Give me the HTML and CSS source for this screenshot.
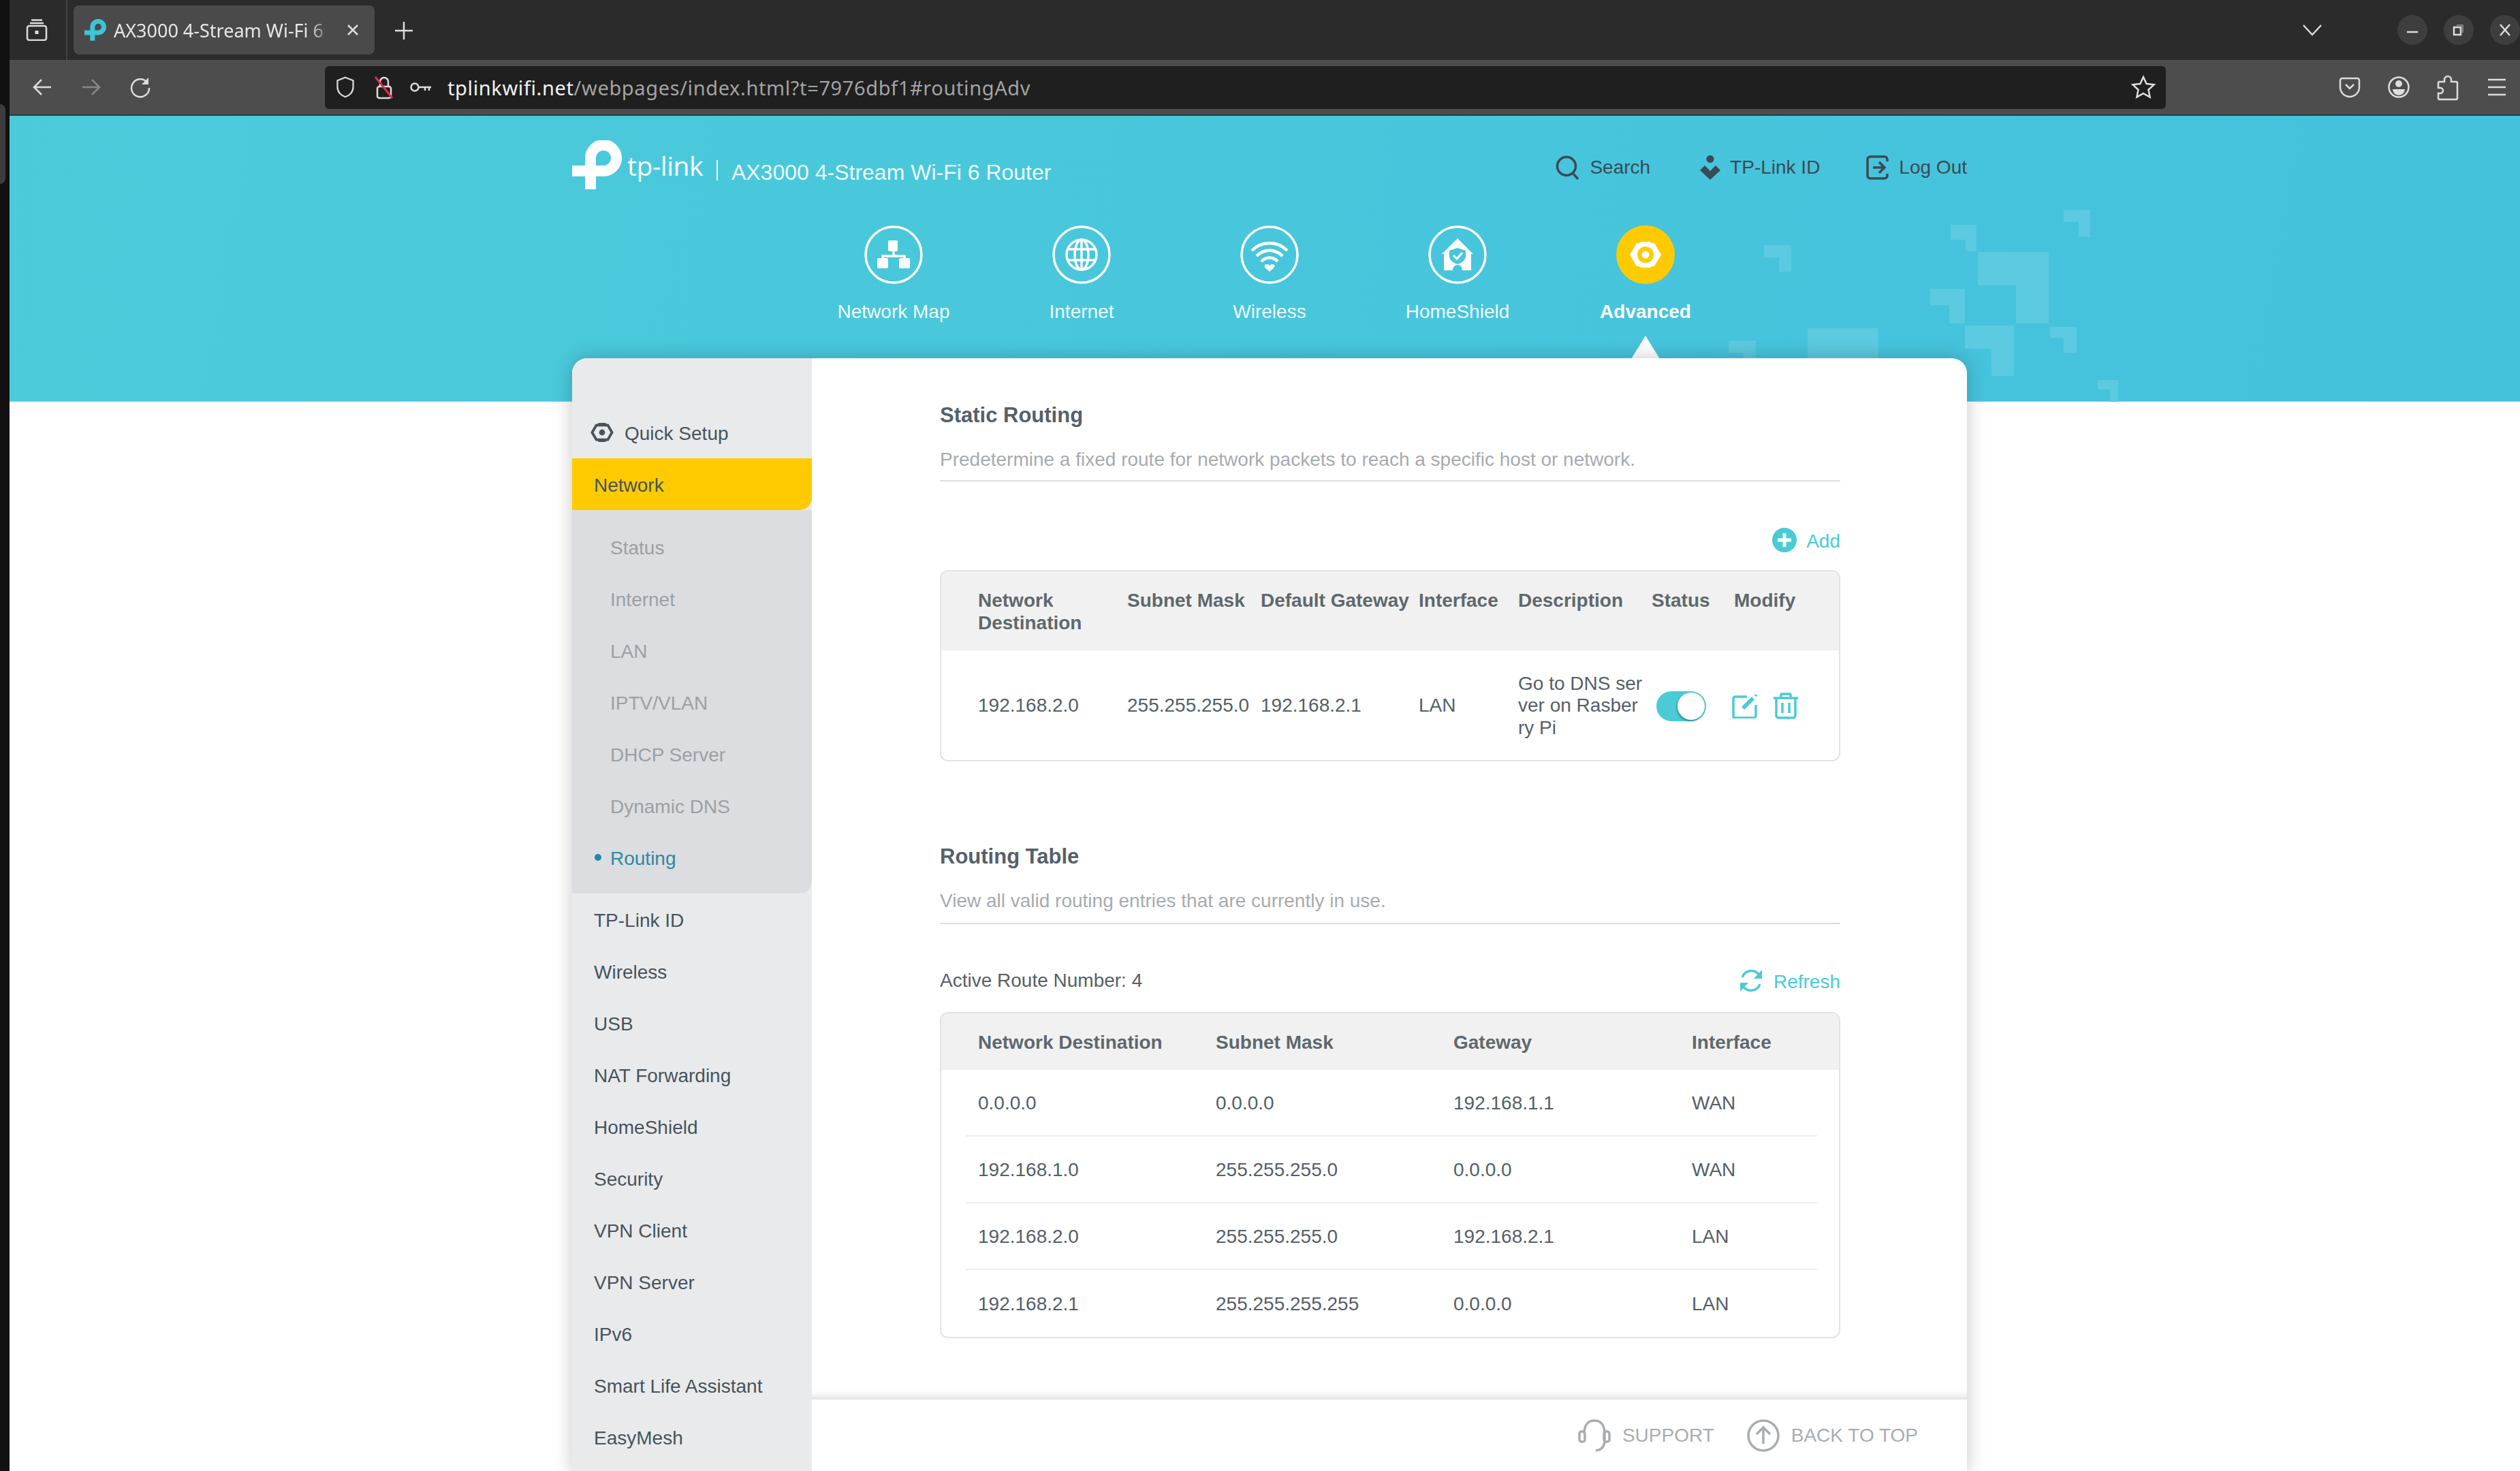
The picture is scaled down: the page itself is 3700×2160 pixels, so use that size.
FILE: index.html
```html
<!DOCTYPE html>
<html>
<head>
	<title>AX3000 4-Stream Wi-Fi 6 Router</title>
	<link rel="stylesheet" href="styles.css">
</head>
<body>
<div class="desk">
	<div class="strip"><div class="dock-item"></div></div>
	<div class="window">

		<!-- barra de abas -->
		<div class="tabbar">
			<div class="tabs-btn">
				<svg class="ic32" viewBox="0 0 32 32"><path class="line" d="M8 1.500h16M6 6h20"/><rect class="line" x="2" y="10" width="28" height="21" rx="3"/><rect x="13.500" y="17" width="5" height="5" fill="#ddd"/></svg>
			</div>
			<div class="tab">
				<svg class="favicon" viewBox="0 0 73 72"><path class="logo-path cyan" d="M27 72V26A19 19 0 1 1 46 45H0"/></svg>
				<span class="tab-title">AX3000 4-Stream Wi-Fi 6</span>
				<svg class="ic20" viewBox="0 0 20 20"><path class="line" d="M3 3l14 14M17 3L3 17"/></svg>
			</div>
			<div class="new-tab">
				<svg class="ic32" viewBox="0 0 32 32"><path class="line" d="M16 3v26M3 16h26"/></svg>
			</div>
			<div class="tabbar-right">
				<svg class="chevron" viewBox="0 0 32 20"><path class="line" d="M3 3l13 14L29 3"/></svg>
				<div class="win-btn"><svg class="ic20" viewBox="0 0 20 20"><path class="line" d="M2 13h16"/></svg></div>
				<div class="win-btn"><svg class="ic20" viewBox="0 0 20 20"><rect class="line" x="3" y="6" width="10" height="11"/><path class="line thin" d="M7 3h9v11"/></svg></div>
				<div class="win-btn"><svg class="ic20" viewBox="0 0 20 20"><path class="line" d="M3 2l14 16M17 2L3 18"/></svg></div>
			</div>
		</div>

		<!-- barra de endereco -->
		<div class="toolbar">
			<div class="tool-btn"><svg class="ic32" viewBox="0 0 32 32"><path class="line" d="M29 16H5M15 5L4 16l11 11"/></svg></div>
			<div class="tool-btn off"><svg class="ic32" viewBox="0 0 32 32"><path class="line" d="M3 16h24M17 5l11 11-11 11"/></svg></div>
			<div class="tool-btn"><svg class="ic32" viewBox="0 0 32 32"><path class="line" d="M26 9A13 13 0 1 0 29 17"/><path d="M28 2v10H18z" fill="#ddd"/></svg></div>
			<div class="urlbar">
				<svg class="ic32" viewBox="0 0 32 36"><path class="line" d="M16 2l13 5v11c0 8-6 14-13 16C9 32 3 26 3 18V7z"/></svg>
				<svg class="ic32 lock" viewBox="0 0 32 36"><rect class="line" x="6" y="17" width="20" height="17" rx="3"/><path class="line" d="M10 17v-7a6 6 0 0 1 12 0v7"/><path class="slash" d="M3 3l25 31"/></svg>
				<svg class="ic32 key" viewBox="0 0 32 20"><circle class="line" cx="7" cy="10" r="5.500"/><path class="line" d="M13 10h18M22 10v5M28 10v5"/></svg>
				<div class="url"><span class="url-host">tplinkwifi.net</span>/webpages/index.html?t=7976dbf1#routingAdv</div>
				<svg class="ic36 star" viewBox="0 0 36 36"><path class="line" d="M18 3l4.600 10 10.900 1.300-8 7.500 2.100 10.700-9.600-5.400-9.600 5.400 2.100-10.700-8-7.500L13.400 13z"/></svg>
			</div>
			<div class="tool-right">
				<div class="tool-btn"><svg class="ic32" viewBox="0 0 32 32"><path class="line" d="M5 3h22a3 3 0 0 1 3 3v10a14 14 0 0 1-28 0V6a3 3 0 0 1 3-3z"/><path class="line" d="M10 12l6 6 6-6"/></svg></div>
				<div class="tool-btn"><svg class="ic32" viewBox="0 0 32 32"><circle class="line" cx="16" cy="16" r="14.500"/><circle cx="16" cy="11" r="5" fill="#ddd"/><path d="M7 19h18a9 9 0 0 1-18 0z" fill="#ddd"/></svg></div>
				<div class="tool-btn"><svg class="ic32 tall" viewBox="0 0 32 40"><path class="line" d="M4 38a2 2 0 0 1-2-2v-7h3a4 4 0 0 0 0-8H2v-7a2 2 0 0 1 2-2h7V9a5 5 0 0 1 10 0v3h7a2 2 0 0 1 2 2v22a2 2 0 0 1-2 2z"/></svg></div>
				<div class="tool-btn"><svg class="ic32" viewBox="0 0 32 32"><path class="line" d="M3 5h26M3 16h26M3 27h26"/></svg></div>
			</div>
		</div>

		<div class="page">
			<header class="hero">
				<svg class="hero-pattern" viewBox="0 0 3686 420">
					<g transform="translate(-14 -170)">
						<path d="M2538 500h40v40h-18v-22h-22z"/>
						<path d="M2590 360h40v39h-18v-21h-22z"/>
						<path d="M2654 482h104v120h-60v-64h-44z"/>
						<path d="M2864 330h38v39h-16v-17h-22z"/>
						<path d="M3030 308h39v40h-17v-22h-22z"/>
						<path d="M2904 370h104v105h-48v-56h-56z"/>
						<path d="M2834 424h51v51h-23v-27h-28z"/>
						<path d="M2885 478h72v74h-33v-40h-39z"/>
						<path d="M3010 480h39v38h-19v-22h-20z"/>
						<path d="M3080 558h30v32h-12v-18h-18z"/>
					</g>
				</svg>
				<div class="hero-top">
					<div class="brand">
						<svg class="logo" viewBox="0 0 73 72"><path class="logo-path" d="M27 72V26A19 19 0 1 1 46 45H0"/></svg>
						<span class="logo-name">tp-link</span>
						<span class="brand-sep"></span>
						<span class="model">AX3000 4-Stream Wi-Fi 6 Router</span>
					</div>
					<div class="top-links">
						<a class="top-link">
							<svg class="ic36" viewBox="0 0 36 36"><circle class="dark-line" cx="16" cy="16" r="13.500"/><path class="dark-line" d="M25 26l8 9"/></svg>
							Search
						</a>
						<a class="top-link">
							<svg class="ic36 person" viewBox="0 0 30 36"><circle cx="15" cy="5.500" r="5.500" fill="#3b4a54"/><path d="M0 22l7-7 8 8 8-8 7 7-15 14z" fill="#3b4a54"/></svg>
							TP-Link ID
						</a>
						<a class="top-link">
							<svg class="ic36 logout" viewBox="0 0 34 36"><path class="dark-line" d="M31 9V6a4 4 0 0 0-4-4H6a4 4 0 0 0-4 4v24a4 4 0 0 0 4 4h21a4 4 0 0 0 4-4v-3"/><path class="dark-line" d="M10 18h17M19 10l8 8-8 8"/></svg>
							Log Out
						</a>
					</div>
				</div>
				<nav class="main-nav">
					<a class="nav-item">
						<svg class="nav-icon" viewBox="0 0 86 86"><circle class="ring" cx="43" cy="43" r="41"/><rect x="35" y="22" width="14" height="16" rx="2" fill="#fff"/><rect x="19" y="48" width="16" height="15" rx="2" fill="#fff"/><rect x="51" y="48" width="16" height="15" rx="2" fill="#fff"/><path class="glyph" d="M43 38v7M27 49v-4h32v4"/></svg>
						<span>Network Map</span>
					</a>
					<a class="nav-item">
						<svg class="nav-icon" viewBox="0 0 86 86"><circle class="ring" cx="43" cy="43" r="41"/><circle class="glyph" cx="43" cy="43" r="22"/><ellipse class="glyph" cx="43" cy="43" rx="10" ry="22"/><path class="glyph" d="M43 21v44M23 35h40M23 51h40"/></svg>
						<span>Internet</span>
					</a>
					<a class="nav-item">
						<svg class="nav-icon" viewBox="0 0 86 86"><circle class="ring" cx="43" cy="43" r="41"/><path class="glyph thick" d="M17 37a36 36 0 0 1 52 0M24 45a26 26 0 0 1 38 0M31 53a16 16 0 0 1 24 0"/><path d="M36 58a5 5 0 0 1 7 1 5 5 0 0 1 7-1c2 3-3 6-7 10-4-4-9-7-7-10z" fill="#fff"/></svg>
						<span>Wireless</span>
					</a>
					<a class="nav-item">
						<svg class="nav-icon" viewBox="0 0 86 86"><circle class="ring" cx="43" cy="43" r="41"/><path d="M43 19l23 23h-3v24H50c0-5-3-8-7-8s-7 3-7 8H23V42h-3z" fill="#fff"/><path d="M43 33l12 4v8c0 6-6 10-12 12-6-2-12-6-12-12v-8z" fill="#47c6dc"/><path d="M37 44l5 5 8-9" fill="none" stroke="#fff" stroke-width="3"/></svg>
						<span>HomeShield</span>
					</a>
					<a class="nav-item current">
						<svg class="nav-icon" viewBox="0 0 86 86"><circle cx="43" cy="43" r="43" fill="#ffcb00"/><path d="M20 43l10-17h4a4 4 0 0 1 4-2h10a4 4 0 0 1 4 2h4l10 17-10 17h-4a4 4 0 0 1-4 2H38a4 4 0 0 1-4-2h-4z" fill="#fff"/><circle cx="43" cy="43" r="12" fill="#ffcb00"/><circle cx="43" cy="43" r="5.500" fill="#fff"/></svg>
						<span>Advanced</span>
					</a>
				</nav>
			</header>

			<main class="card">
				<aside class="sidebar">
					<a class="side-item quick">
						<svg class="quick-icon" viewBox="17 21 52 44"><path d="M20 43l10-17h4a4 4 0 0 1 4-2h10a4 4 0 0 1 4 2h4l10 17-10 17h-4a4 4 0 0 1-4 2H38a4 4 0 0 1-4-2h-4z" fill="#46545c"/><path d="M26 43l7-12h20l7 12-7 12H33z" fill="#e9eaec"/><circle cx="43" cy="43" r="6" fill="#46545c"/></svg>
						<span class="side-text">Quick Setup</span>
					</a>
					<a class="side-item active"><span class="side-text">Network</span></a>
					<div class="submenu">
						<a class="sub-item"><span class="side-text">Status</span></a>
						<a class="sub-item"><span class="side-text">Internet</span></a>
						<a class="sub-item"><span class="side-text">LAN</span></a>
						<a class="sub-item"><span class="side-text">IPTV/VLAN</span></a>
						<a class="sub-item"><span class="side-text">DHCP Server</span></a>
						<a class="sub-item"><span class="side-text">Dynamic DNS</span></a>
						<a class="sub-item selected"><span class="side-text">Routing</span></a>
					</div>
					<a class="side-item"><span class="side-text">TP-Link ID</span></a>
					<a class="side-item"><span class="side-text">Wireless</span></a>
					<a class="side-item"><span class="side-text">USB</span></a>
					<a class="side-item"><span class="side-text">NAT Forwarding</span></a>
					<a class="side-item"><span class="side-text">HomeShield</span></a>
					<a class="side-item"><span class="side-text">Security</span></a>
					<a class="side-item"><span class="side-text">VPN Client</span></a>
					<a class="side-item"><span class="side-text">VPN Server</span></a>
					<a class="side-item"><span class="side-text">IPv6</span></a>
					<a class="side-item"><span class="side-text">Smart Life Assistant</span></a>
					<a class="side-item"><span class="side-text">EasyMesh</span></a>
				</aside>

				<div class="content-col">
					<div class="content">
						<section class="block-static">
							<h2 class="block-title">Static Routing</h2>
							<p class="block-desc">Predetermine a fixed route for network packets to reach a specific host or network.</p>
							<div class="actions first">
								<a class="action">
									<svg class="ic36" viewBox="0 0 36 36"><circle cx="18" cy="18" r="18" fill="#4acbd6"/><path d="M18 8v20M8 18h20" stroke="#fff" stroke-width="5"/></svg>
									<span class="action-text">Add</span>
								</a>
							</div>
							<div class="grid-table">
								<div class="row head-row static-cols">
									<div>Network Destination</div>
									<div>Subnet Mask</div>
									<div>Default Gateway</div>
									<div>Interface</div>
									<div>Description</div>
									<div>Status</div>
									<div>Modify</div>
								</div>
								<div class="row body-row static-cols">
									<div>192.168.2.0</div>
									<div>255.255.255.0</div>
									<div>192.168.2.1</div>
									<div>LAN</div>
									<div class="desc-cell">Go to DNS server on Rasberry Pi</div>
									<div><div class="toggle"></div></div>
									<div class="modify">
										<svg class="edit-icon" viewBox="0 0 38 36"><path class="teal-line" d="M22 4H5a3 3 0 0 0-3 3v26a2 2 0 0 0 2 2h28a3 3 0 0 0 3-3V16"/><path class="teal-line fat" d="M16 21L31 6"/><path class="teal-line" d="M34 3l2-2"/></svg>
										<svg class="trash-icon" viewBox="0 0 36 39"><path class="teal-line" d="M0 8h36M11 8V3a1 1 0 0 1 1-1h12a1 1 0 0 1 1 1v5M4 8v26a3 3 0 0 0 3 3h22a3 3 0 0 0 3-3V8M13 15v15M23 15v15"/></svg>
									</div>
								</div>
							</div>
						</section>

						<section class="block-table">
							<h2 class="block-title">Routing Table</h2>
							<p class="block-desc">View all valid routing entries that are currently in use.</p>
							<div class="actions second">
								<span class="route-count">Active Route Number: 4</span>
								<a class="action">
									<svg class="refresh-icon" viewBox="0 0 38 38"><path class="teal-line" d="M6 14A14 14 0 0 1 31 11M32 24A14 14 0 0 1 7 27"/><path d="M35 3v13H23zM3 35V22h12z" fill="#4acbd6"/></svg>
									<span class="action-text">Refresh</span>
								</a>
							</div>
							<div class="grid-table">
								<div class="row head-row route-head route-cols">
									<div>Network Destination</div>
									<div>Subnet Mask</div>
									<div>Gateway</div>
									<div>Interface</div>
								</div>
								<div class="row route-row route-cols"><div>0.0.0.0</div><div>0.0.0.0</div><div>192.168.1.1</div><div>WAN</div></div>
								<div class="row route-row route-cols"><div>192.168.1.0</div><div>255.255.255.0</div><div>0.0.0.0</div><div>WAN</div></div>
								<div class="row route-row route-cols"><div>192.168.2.0</div><div>255.255.255.0</div><div>192.168.2.1</div><div>LAN</div></div>
								<div class="row route-row route-cols"><div>192.168.2.1</div><div>255.255.255.255</div><div>0.0.0.0</div><div>LAN</div></div>
							</div>
						</section>
					</div>

					<footer class="card-footer">
						<a class="foot-link">
							<svg class="foot-icon" viewBox="0 0 48 48"><path class="grey-line" d="M9 21C9 8 15 2 24 2s15 6 15 19v10c0 9-5 14-13 15"/><rect class="grey-line" x="2" y="18" width="8" height="15" rx="3"/><rect class="grey-line" x="38" y="18" width="8" height="15" rx="3"/></svg>
							SUPPORT
						</a>
						<a class="foot-link">
							<svg class="foot-icon" viewBox="0 0 48 48"><circle class="grey-line" cx="24" cy="24" r="22"/><path class="grey-line" d="M24 36V13M14 22l10-10 10 10"/></svg>
							BACK TO TOP
						</a>
					</footer>
				</div>
			</main>
		</div>
	</div>
</div>
</body>
</html>
```

FILE: styles.css
```css
* {
  box-sizing: border-box;
}

html, body {
  margin: 0;
  height: 2160px;
  overflow: hidden;
  background: #fff;
  font-family: "Liberation Sans", Arial, sans-serif;
  font-size: 28px;
  color: #555f66;
}

svg {
  display: block;
  flex: none;
}

.desk {
  display: flex;
  height: 2160px;
}

.strip {
  position: relative;
  width: 14px;
  background: #111;
}

.dock-item {
  position: absolute;
  left: 0;
  top: 153px;
  width: 8px;
  height: 117px;
  background: #3c3c3c;
  border-radius: 0 8px 8px 0;
}

.window {
  width: 3686px;
}

/* icones do navegador */
.line {
  fill: none;
  stroke: #ddd;
  stroke-width: 2.5;
}

.line.thin {
  stroke-width: 1.5;
  stroke: #999;
}

.slash {
  stroke: #e0304f;
  stroke-width: 3;
}

.ic20 {
  width: 20px;
  height: 20px;
}

.ic32 {
  width: 32px;
  height: 32px;
}

.ic36 {
  width: 36px;
  height: 36px;
}

/* barra de abas */
.tabbar {
  display: flex;
  height: 88px;
  background: #2b2b2b;
  font-family: "Noto Sans", sans-serif;
  color: #e6e6e6;
}

.tabs-btn {
  display: flex;
  align-items: center;
  justify-content: center;
  width: 85px;
  padding-right: 4px;
  border-right: 2px solid #444;
}

.tab {
  display: flex;
  align-items: center;
  width: 442px;
  height: 72px;
  margin: 8px 0 0 9px;
  padding: 0 22px 0 16px;
  background: #4a4a4a;
  border-radius: 8px;
}

.favicon {
  width: 32px;
  height: 32px;
}

.logo-path {
  fill: none;
  stroke: #fff;
  stroke-width: 16;
}

.logo-path.cyan {
  stroke: #3fc3d6;
}

.tab-title {
  flex: 1;
  margin-left: 11px;
  font-size: 27px;
  white-space: nowrap;
  -webkit-mask-image: linear-gradient(to right, #000 84%, rgba(0, 0, 0, 0.2) 92%);
  mask-image: linear-gradient(to right, #000 84%, rgba(0, 0, 0, 0.2) 92%);
}

.new-tab {
  display: flex;
  align-items: center;
  justify-content: center;
  width: 56px;
  margin-left: 15px;
  padding-top: 2px;
}

.tabbar-right {
  display: flex;
  align-items: center;
  gap: 24px;
  margin-left: auto;
}

.chevron {
  width: 32px;
  height: 20px;
  margin-right: 85px;
}

.win-btn {
  display: flex;
  align-items: center;
  justify-content: center;
  width: 44px;
  height: 44px;
  background: #3e3e3e;
  border-radius: 50%;
}

/* barra de endereco */
.toolbar {
  display: flex;
  align-items: center;
  height: 82px;
  padding-left: 12px;
  background: #4d4d4d;
  border-bottom: 2px solid #2a3a40;
}

.tool-btn {
  display: flex;
  flex: none;
  align-items: center;
  justify-content: center;
  width: 72px;
  height: 72px;
}

.tool-btn.off {
  opacity: 0.4;
}

.urlbar {
  display: flex;
  flex: none;
  align-items: center;
  width: 2703px;
  height: 63px;
  margin-left: 235px;
  padding: 0 15px 0 14px;
  background: #1f1f1f;
  border-radius: 6px;
  font-family: "Noto Sans", sans-serif;
  font-size: 29px;
  letter-spacing: 0.62px;
  color: #a3a3a3;
}

.lock {
  margin-left: 25px;
  height: 36px;
}

.key {
  height: 20px;
  margin-left: 22px;
}

.url {
  margin-left: 23px;
  white-space: nowrap;
}

.url-host {
  color: #f2f2f2;
}

.star {
  margin-left: auto;
}

.tool-right {
  display: flex;
  flex: none;
  width: 286px;
  margin-left: 234px;
}

.tall {
  height: 40px;
}

/* cabecalho azul */
.page {
  height: 1990px;
}

.hero {
  position: relative;
  height: 420px;
  background: linear-gradient(100deg, #4bcbda 0%, #48c6dc 50%, #43c1dd 100%);
  box-shadow: inset 0 -1px 0 #7fdde8;
  color: #fff;
}

.hero-pattern {
  position: absolute;
  left: 0;
  top: 0;
  width: 3686px;
  height: 420px;
  fill: #5ccae0;
}

.hero-top {
  position: relative;
  display: flex;
  align-items: flex-end;
  justify-content: space-between;
  width: 2048px;
  height: 108px;
  margin-left: 826px;
}

.brand {
  display: flex;
  align-items: center;
}

.logo {
  width: 73px;
  height: 72px;
}

.logo-name {
  margin: 0 0 0 8px;
  font-family: "Open Sans", sans-serif;
  font-size: 39px;
  font-weight: 400;
  letter-spacing: -0.5px;
}

.brand-sep {
  width: 2px;
  height: 30px;
  margin: 16px 20px 0 20px;
  background: #e8fbfd;
}

.model {
  margin-top: 22px;
  font-size: 32px;
  color: #eefcfd;
}

.top-links {
  display: flex;
  gap: 68px;
  margin-bottom: 14px;
  color: #3b4a54;
}

.top-link {
  display: flex;
  align-items: center;
  gap: 14px;
}

.top-link:first-child {
  margin-right: 5px;
}

.person {
  width: 30px;
}

.logout {
  width: 34px;
}

.dark-line {
  fill: none;
  stroke: #3b4a54;
  stroke-width: 3.5;
}

.main-nav {
  position: relative;
  display: flex;
  justify-content: center;
  margin: 53px 0 0 14px;
}

.nav-item {
  display: flex;
  flex-direction: column;
  align-items: center;
  width: 276px;
  color: #eefcfd;
}

.nav-icon {
  width: 86px;
  height: 86px;
  margin-bottom: 25px;
}

.ring,
.glyph {
  fill: none;
  stroke: #fff;
  stroke-width: 3.5;
}

.glyph.thick {
  stroke-width: 4.500;
}

.nav-item.current {
  position: relative;
  font-weight: bold;
  color: #fff;
}

.nav-item.current::after {
  content: "";
  position: absolute;
  left: 117px;
  top: 162px;
  border-left: 21px solid transparent;
  border-right: 21px solid transparent;
  border-bottom: 34px solid #fff;
}

/* cartao principal */
.card {
  position: relative;
  display: flex;
  width: 2048px;
  height: 1640px;
  margin: -64px 0 0 826px;
  background: #fff;
  border-radius: 22px 22px 0 0;
  box-shadow: 0 0 28px rgba(0, 0, 0, 0.22);
  overflow: hidden;
}

.sidebar {
  width: 352px;
  padding-top: 71px;
  background: #e9eaec;
}

.side-item {
  display: flex;
  align-items: center;
  height: 76px;
  padding-left: 32px;
  color: #46545c;
}

.side-text {
  padding-top: 4px;
}

.side-item.quick {
  padding-left: 25px;
}

.quick-icon {
  width: 38px;
  height: 34px;
  margin-right: 14px;
}

.side-item.active {
  background: #ffcb00;
  border-radius: 0 0 18px 0;
}

.submenu {
  padding: 16px 0 15px;
  background: #dcdde0;
  border-radius: 0 0 18px 0;
}

.sub-item {
  position: relative;
  display: flex;
  align-items: center;
  height: 76px;
  padding-left: 56px;
  color: #9aa0a6;
}

.sub-item.selected {
  color: #2f88a5;
}

.sub-item.selected::before {
  content: "";
  position: absolute;
  left: 33px;
  top: 33px;
  width: 10px;
  height: 10px;
  background: #1d8ba3;
  border-radius: 50%;
}

/* conteudo */
.content-col {
  display: flex;
  flex-direction: column;
  width: 1696px;
}

.content {
  height: 1529px;
  padding: 62px 186px 0 188px;
  box-shadow: inset 0 -16px 16px -16px rgba(120, 125, 130, 0.45);
}

.block-title {
  margin: 0;
  font-size: 31px;
  line-height: 40px;
  font-weight: bold;
  color: #56606a;
}

.block-desc {
  margin: 28px 0 0;
  padding-bottom: 15px;
  line-height: 34px;
  color: #a7abaf;
  border-bottom: 2px solid #ddd;
}

.block-static .block-title {
  margin-top: 2px;
}

.block-static .block-desc {
  padding-bottom: 13px;
}

.block-table {
  margin-top: 120px;
}

.actions {
  display: flex;
  align-items: center;
  justify-content: flex-end;
  height: 40px;
}

.actions.first {
  margin: 66px 0 24px;
}

.actions.second {
  justify-content: space-between;
  margin: 63px 0 26px;
}

.action {
  display: flex;
  align-items: center;
  gap: 14px;
  color: #4acbd6;
}

.action-text {
  padding-top: 3px;
}

.refresh-icon {
  width: 38px;
  height: 38px;
}

.teal-line {
  fill: none;
  stroke: #4acbd6;
  stroke-width: 3.5;
}

.teal-line.fat {
  stroke-width: 6;
}

/* tabelas */
.grid-table {
  border: 2px solid #e3e3e3;
  border-radius: 12px;
  overflow: hidden;
}

.row {
  display: grid;
  line-height: 32.5px;
}

.head-row {
  padding: 27px 0 0 54px;
  height: 116px;
  background: #f1f1f1;
  font-weight: bold;
  color: #5f686d;
}

.body-row {
  align-items: center;
  height: 161px;
  padding: 2px 0 0 54px;
}

.static-cols {
  grid-template-columns: 219px 196px 232px 146px 196px 121px 1fr;
}

.static-cols > div:first-child {
  padding-right: 40px;
}

.desc-cell {
  width: 183px;
  word-break: break-all;
}

.toggle {
  position: relative;
  width: 73px;
  height: 44px;
  margin-left: 7px;
  background: #4acbd6;
  border-radius: 22px;
}

.toggle::after {
  content: "";
  position: absolute;
  right: 2px;
  top: 2px;
  width: 40px;
  height: 40px;
  background: #fff;
  border-radius: 50%;
  box-shadow: -1px 2px 3px rgba(30, 80, 80, 0.5);
}

.modify {
  display: flex;
  align-items: center;
  gap: 23px;
  margin-left: -3px;
}

.edit-icon {
  width: 38px;
  height: 36px;
}

.trash-icon {
  width: 36px;
  height: 39px;
}

.route-cols {
  grid-template-columns: 349px 349px 350px 1fr;
}

.route-head {
  height: 83px;
  padding-top: 27px;
}

.route-row {
  align-items: center;
  height: 98px;
  margin: 0 32px 0 36px;
  padding: 2px 0 0 18px;
  border-bottom: 2px solid #eee;
}

.route-row:last-child {
  border-bottom: none;
}

/* rodape */
.card-footer {
  display: flex;
  justify-content: flex-end;
  align-items: center;
  gap: 48px;
  height: 105px;
  padding-right: 72px;
  color: #a9adb0;
}

.foot-link {
  display: flex;
  align-items: center;
  gap: 17px;
}

.foot-icon {
  width: 48px;
  height: 48px;
}

.grey-line {
  fill: none;
  stroke: #a9adb0;
  stroke-width: 3.5;
}
```
